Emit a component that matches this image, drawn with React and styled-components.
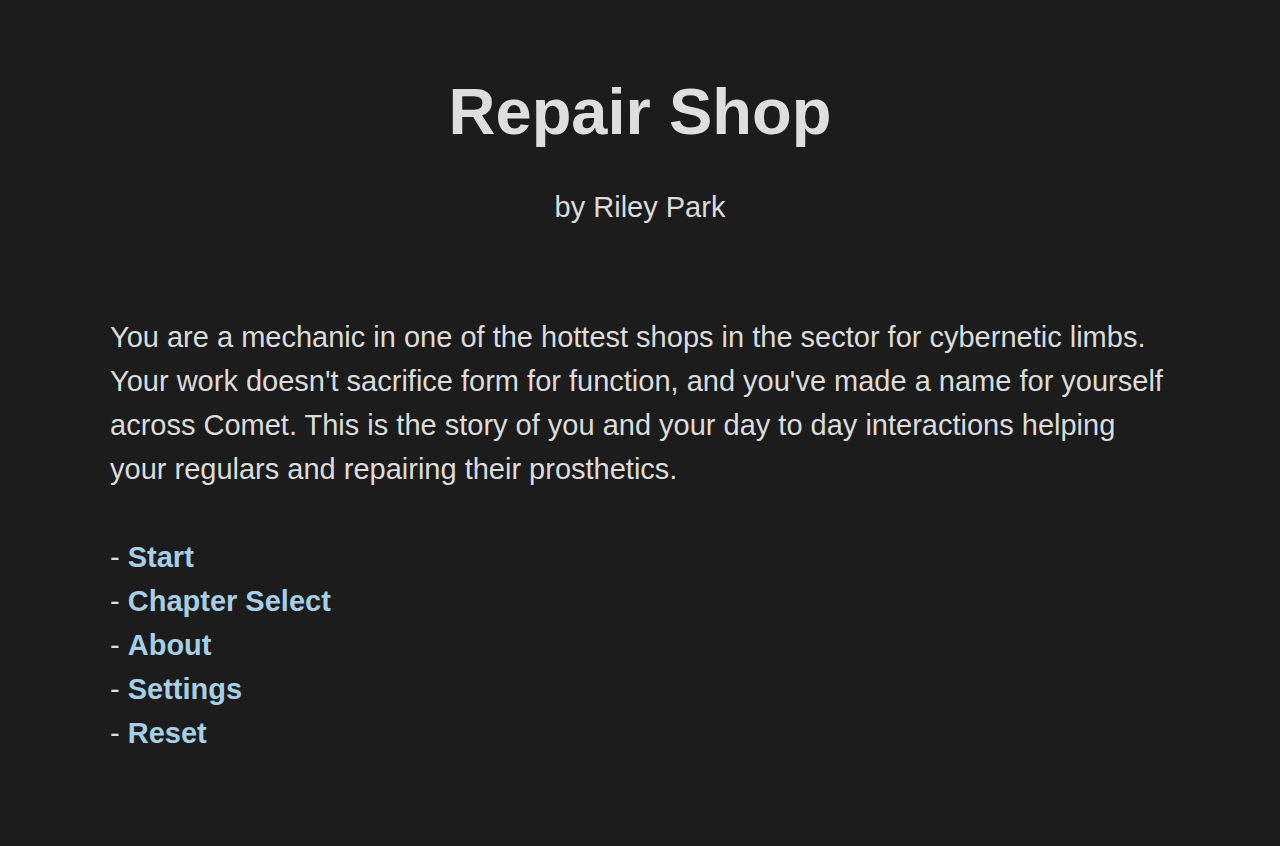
import styled, { createGlobalStyle } from "styled-components";

const Global = createGlobalStyle`
  html, body {
    margin: 0;
    padding: 0;
    background: #1c1c1c;
  }
  body {
    font-family: "Liberation Sans", Arial, sans-serif;
    color: #dcdcdc;
  }
`;

const Page = styled.main`
  box-sizing: border-box;
  min-height: 846px;
  padding: 72px 110px 40px 110px;
`;

const Title = styled.h1`
  margin: 0;
  text-align: center;
  font-size: 65px;
  line-height: 80px;
  font-weight: 700;
  color: #dedede;
`;

const Byline = styled.p`
  margin: 35px 0 0;
  text-align: center;
  font-size: 29px;
  line-height: 40px;
`;

const Intro = styled.p`
  margin: 88px 0 0;
  font-size: 29px;
  line-height: 44px;
`;

const Menu = styled.ul`
  list-style: none;
  margin: 44px 0 0;
  padding: 0;
  font-size: 29px;
  line-height: 44px;
`;

const Item = styled.li`
  &::before {
    content: "- ";
  }
`;

const Link = styled.a`
  color: #a6cfe6;
  font-weight: 700;
  text-decoration: none;
  cursor: pointer;
`;

const items = ["Start", "Chapter Select", "About", "Settings", "Reset"];

export default function App() {
  return (
    <>
      <Global />
      <Page>
        <Title>Repair Shop</Title>
        <Byline>by Riley Park</Byline>
        <Intro>
          You are a mechanic in one of the hottest shops in the sector for cybernetic limbs.
          Your work doesn't sacrifice form for function, and you've made a name for yourself
          across Comet. This is the story of you and your day to day interactions helping
          your regulars and repairing their prosthetics.
        </Intro>
        <Menu>
          {items.map((label) => (
            <Item key={label}>
              <Link>{label}</Link>
            </Item>
          ))}
        </Menu>
      </Page>
    </>
  );
}
